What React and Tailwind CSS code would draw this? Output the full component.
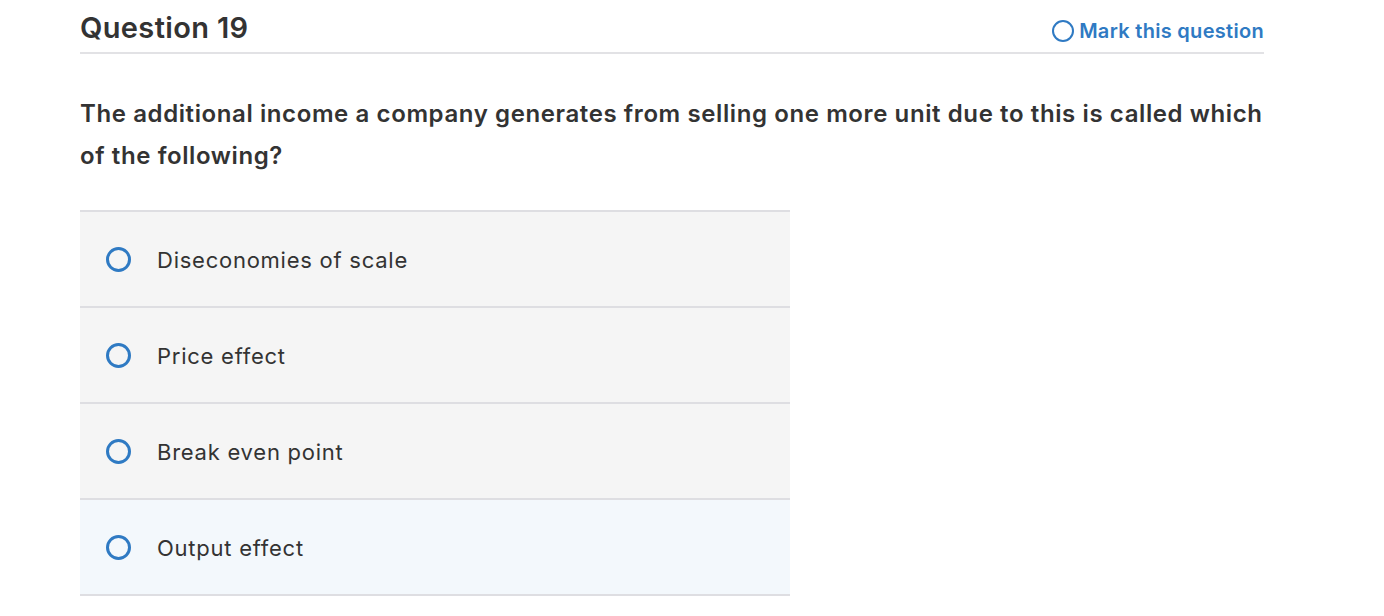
import React from "react";

const options = [
  { label: "Diseconomies of scale", bg: "bg-[#f5f5f5]" },
  { label: "Price effect", bg: "bg-[#f5f5f5]" },
  { label: "Break even point", bg: "bg-[#f5f5f5]" },
  { label: "Output effect", bg: "bg-[#f3f8fc]" },
];

export default function App() {
  return (
    <div className="w-[1384px] h-[616px] bg-white overflow-hidden text-[#333333]" style={{ fontFamily: "Inter, 'Noto Sans', sans-serif" }}>
      <div className="ml-[80px] w-[1184px]">
        <div className="flex items-center justify-between h-[54px] border-b-2 border-[#e2e2e5]">
          <h1 className="text-[29px] font-semibold leading-none tracking-[0.35px] mt-[2px]">Question 19</h1>
          <button className="flex items-center gap-[5px] text-[#2f7ac3] text-[20px] font-semibold tracking-[0.3px] mt-[9px]">
            <span className="w-[22px] h-[22px] rounded-full border-2 border-[#2f7ac3]"></span>
            Mark this question
          </button>
        </div>
        <p className="mt-[39px] text-[24px] leading-[42px] font-semibold tracking-[0.6px]">
          The additional income a company generates from selling one more unit due to this is called which of the following?
        </p>
        <div className="mt-[33px] w-[710px] border-t-2 border-[#dedee2]">
          {options.map((o) => (
            <div key={o.label} className={`flex items-center h-[96px] border-b-2 border-[#dedee2] ${o.bg}`}>
              <span className="ml-[26px] w-[25px] h-[25px] rounded-full border-[3px] border-[#2f7ac3]"></span>
              <span className="ml-[26px] mt-[2px] text-[22px] tracking-[0.75px]">{o.label}</span>
            </div>
          ))}
        </div>
      </div>
    </div>
  );
}
